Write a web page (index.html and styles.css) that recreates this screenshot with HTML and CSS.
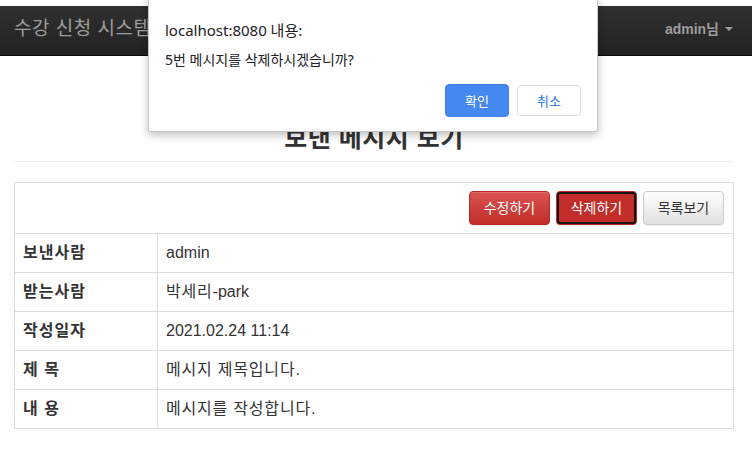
FILE: index.html
```html
<!DOCTYPE html>
<html lang="ko">
<head>
<meta charset="utf-8">
<title>보낸 메시지 보기</title>
<link rel="stylesheet" href="styles.css">
</head>
<body>
<div class="page">
  <nav class="navbar">
    <span class="brand">수강 신청 시스템</span>
    <span class="user">admin님 <span class="caret"></span></span>
  </nav>
  <main class="container">
    <div class="page-header">
      <h3 class="title">보낸 메시지 보기</h3>
    </div>
    <table class="msg-table">
      <tr>
        <td colspan="2" class="actions">
          <div class="btn-row">
            <button class="btn btn-danger">수정하기</button>
            <button class="btn btn-danger btn-focus">삭제하기</button>
            <button class="btn btn-default">목록보기</button>
          </div>
        </td>
      </tr>
      <tr><th>보낸사람</th><td>admin</td></tr>
      <tr><th>받는사람</th><td><span class="ko">박세리</span>-park</td></tr>
      <tr><th>작성일자</th><td>2021.02.24 11:14</td></tr>
      <tr><th>제 목</th><td class="ko">메시지 제목입니다.</td></tr>
      <tr><th>내 용</th><td class="ko">메시지를 작성합니다.</td></tr>
    </table>
  </main>
</div>
<div class="dialog">
  <div class="dlg-title">localhost:8080 내용:</div>
  <div class="dlg-msg">5번 메시지를 삭제하시겠습니까?</div>
  <div class="dlg-buttons">
    <button class="dlg-btn dlg-ok">확인</button>
    <button class="dlg-btn dlg-cancel">취소</button>
  </div>
</div>
</body>
</html>
```

FILE: styles.css
```css
html, body {
  margin: 0;
  padding: 0;
  background: #fff;
}
body {
  font-family: "Liberation Sans", "Noto Sans CJK KR", sans-serif;
  color: #333;
  font-size: 14px;
}
.page {
  padding-top: 6px;
}
.navbar {
  height: 50px;
  box-sizing: border-box;
  background: linear-gradient(to bottom, #303030 0%, #222 100%);
  border-bottom: 1px solid #080808;
  display: flex;
  align-items: center;
  justify-content: space-between;
  padding: 0 19px 0 14px;
}
.brand {
  color: #9d9d9d;
  font-size: 19px;
  letter-spacing: 0.5px;
  line-height: 20px;
  margin-top: -4px;
}
.user {
  color: #9d9d9d;
  font-weight: bold;
  font-size: 14px;
  line-height: 20px;
  margin-top: -3px;
  display: flex;
  align-items: center;
}
.caret {
  display: inline-block;
  width: 0;
  height: 0;
  margin-left: 6px;
  border-top: 4px solid #9d9d9d;
  border-left: 4px solid transparent;
  border-right: 4px solid transparent;
}
.container {
  padding: 0 18px 0 14px;
}
.page-header {
  margin: 68px 0 20px;
  padding-bottom: 9px;
  border-bottom: 1px solid #eee;
}
.title {
  margin: 0;
  text-align: center;
  font-size: 25px;
  letter-spacing: 0.5px;
  line-height: 28px;
  font-weight: bold;
  color: #333;
}
.msg-table {
  width: 100%;
  border-collapse: collapse;
  border: 1px solid #ddd;
}
.msg-table th,
.msg-table td {
  border: 1px solid #ddd;
  padding: 8px;
  font-size: 16px;
  line-height: 22px;
  text-align: left;
  vertical-align: middle;
}
.msg-table th {
  width: 126px;
  font-weight: bold;
  letter-spacing: 1px;
}
.msg-table .ko {
  letter-spacing: 0.8px;
}
.msg-table td.actions {
  padding: 8px 9px 8px 8px;
}
.btn-row {
  display: flex;
  justify-content: flex-end;
  gap: 6px;
}
.btn {
  display: block;
  box-sizing: border-box;
  height: 34px;
  width: 81px;
  padding: 0;
  font-family: "Liberation Sans", "Noto Sans CJK KR", sans-serif;
  font-size: 14px;
  line-height: 32px;
  border-radius: 4px;
  border: 1px solid transparent;
  box-shadow: inset 0 1px 0 rgba(255,255,255,.15), 0 1px 1px rgba(0,0,0,.075);
}
.btn-danger {
  color: #fff;
  background: linear-gradient(to bottom, #d9534f 0%, #c12e2a 100%);
  border-color: #b92c28;
}
.btn-focus {
  background: #c12e2a;
  outline: 2px solid #111;
  outline-offset: -3px;
}
.btn-default {
  color: #333;
  background: linear-gradient(to bottom, #fff 0%, #e0e0e0 100%);
  border-color: #ccc;
}
.dialog {
  position: absolute;
  left: 148px;
  top: -4px;
  width: 450px;
  height: 136px;
  box-sizing: border-box;
  background: #fff;
  border: 1px solid #c8c8c8;
  border-radius: 2px;
  box-shadow: 0 3px 8px rgba(0,0,0,.25);
  padding: 22px 16px 16px 16px;
  font-family: "Noto Sans", "Noto Sans CJK KR", sans-serif;
  color: #202124;
}
.dlg-title {
  font-size: 15px;
  line-height: 22px;
}
.dlg-msg {
  font-size: 14px;
  line-height: 18px;
  margin-top: 10px;
}
.dlg-buttons {
  display: flex;
  justify-content: flex-end;
  gap: 8px;
  margin-top: 15px;
}
.dlg-btn {
  box-sizing: border-box;
  width: 64px;
  height: 32px;
  border-radius: 4px;
  font-family: "Noto Sans", "Noto Sans CJK KR", sans-serif;
  font-size: 13px;
}
.dlg-ok {
  background: #4588ef;
  color: #fff;
  border: 1px solid #3f80e8;
  height: 33px;
}
.dlg-cancel {
  background: #fff;
  color: #1a73e8;
  border: 1px solid #dadce0;
  margin-top: 1px;
  height: 31px;
}
```
